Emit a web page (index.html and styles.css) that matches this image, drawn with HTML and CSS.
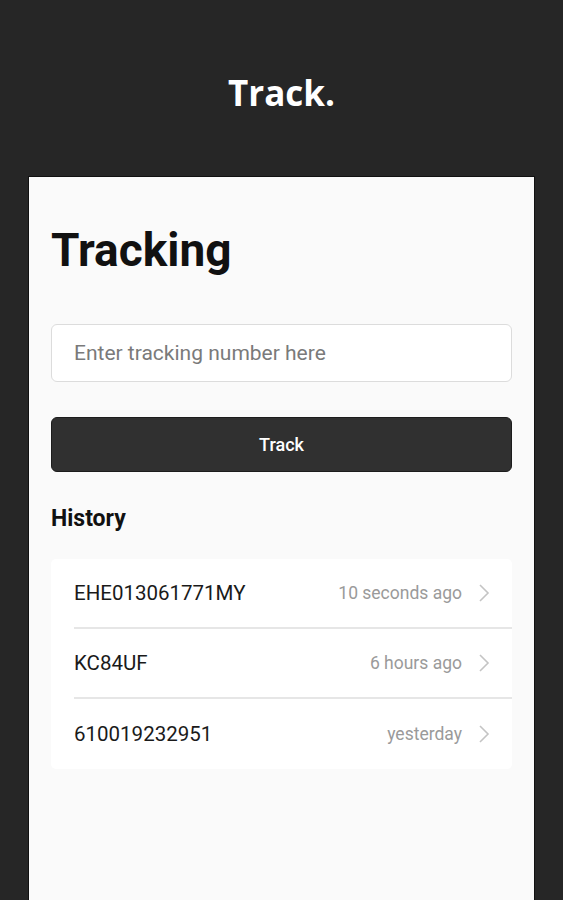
FILE: index.html
```html
<!DOCTYPE html>
<html lang="en">

<head>
  <meta charset="UTF-8">
  <meta name="viewport" content="width=device-width, initial-scale=1.0">
  <title>Track.</title>
  <link rel="stylesheet" href="styles.css">
</head>

<body>
  <header class="topBar">
    <h1 class="logo">Track.</h1>
  </header>

  <main class="card">
    <h2 class="pageTitle">Tracking</h2>

    <input type="text" class="trackInput" placeholder="Enter tracking number here">
    <button class="trackBtn">Track</button>

    <h3 class="historyTitle">History</h3>
    <ul class="historyList">
      <li class="historyItem">
        <span class="code">EHE013061771MY</span>
        <span class="time">10 seconds ago</span>
        <svg class="chevron" width="12" height="20" viewBox="0 0 12 20"><path d="M2 2l8 8-8 8" fill="none" stroke="#c4c4c4" stroke-width="1.6"/></svg>
      </li>
      <li class="historyItem">
        <span class="code">KC84UF</span>
        <span class="time">6 hours ago</span>
        <svg class="chevron" width="12" height="20" viewBox="0 0 12 20"><path d="M2 2l8 8-8 8" fill="none" stroke="#c4c4c4" stroke-width="1.6"/></svg>
      </li>
      <li class="historyItem">
        <span class="code">610019232951</span>
        <span class="time">yesterday</span>
        <svg class="chevron" width="12" height="20" viewBox="0 0 12 20"><path d="M2 2l8 8-8 8" fill="none" stroke="#c4c4c4" stroke-width="1.6"/></svg>
      </li>
    </ul>
  </main>
</body>

</html>
```

FILE: styles.css
```css
html,
body {
  margin: 0;
  padding: 0;
  background-color: #262626;
  height: 100%;
}

body {
  display: flex;
  flex-direction: column;
  font-family: Roboto, "Liberation Sans", sans-serif;
}

.topBar {
  height: 176px;
  display: flex;
  align-items: center;
  justify-content: center;
  flex-shrink: 0;
}

.logo {
  margin: 8px 0 0 0;
  font-family: "Open Sans", "Liberation Sans", sans-serif;
  font-weight: 700;
  font-size: 35px;
  color: #fff;
}

.card {
  flex: 1;
  margin: 0 28px;
  padding: 0 22px;
  background-color: #fafafa;
  border: 1px solid #111;
  border-bottom: none;
  box-sizing: border-box;
}

.pageTitle {
  margin: 47px 0 0 0;
  font-size: 46px;
  font-weight: 700;
  color: #111;
  line-height: 53px;
}

.trackInput {
  display: block;
  width: 100%;
  height: 58px;
  margin-top: 47px;
  padding: 0 22px;
  border: 1px solid #dcdcdc;
  border-radius: 6px;
  background-color: #fff;
  font-family: Roboto, "Liberation Sans", sans-serif;
  font-size: 21px;
  color: #333;
  box-sizing: border-box;
  outline: none;
}

.trackInput::placeholder {
  color: #7a7a7a;
}

.trackBtn {
  display: block;
  width: 100%;
  height: 55px;
  margin-top: 35px;
  border: 1px solid #1c1c1c;
  border-radius: 6px;
  background-color: #303030;
  color: #fff;
  font-family: Roboto, "Liberation Sans", sans-serif;
  font-size: 18px;
  font-weight: 500;
}

.historyTitle {
  margin: 33px 0 0 0;
  font-size: 23px;
  font-weight: 700;
  color: #111;
  line-height: 28px;
}

.historyList {
  list-style: none;
  margin: 26px 0 0 0;
  padding: 0 0 0 23px;
  background-color: #fff;
  border-radius: 5px;
}

.historyItem {
  display: flex;
  align-items: center;
  height: 70px;
  border-bottom: 2px solid #e6e6e6;
  box-sizing: border-box;
  padding-right: 22px;
}

.historyItem:last-child {
  border-bottom: none;
}

.code {
  flex: 1;
  font-size: 20.5px;
  color: #1a1a1a;
}

.time {
  font-size: 17.5px;
  color: #9a9a9a;
  margin-right: 16px;
}
```
